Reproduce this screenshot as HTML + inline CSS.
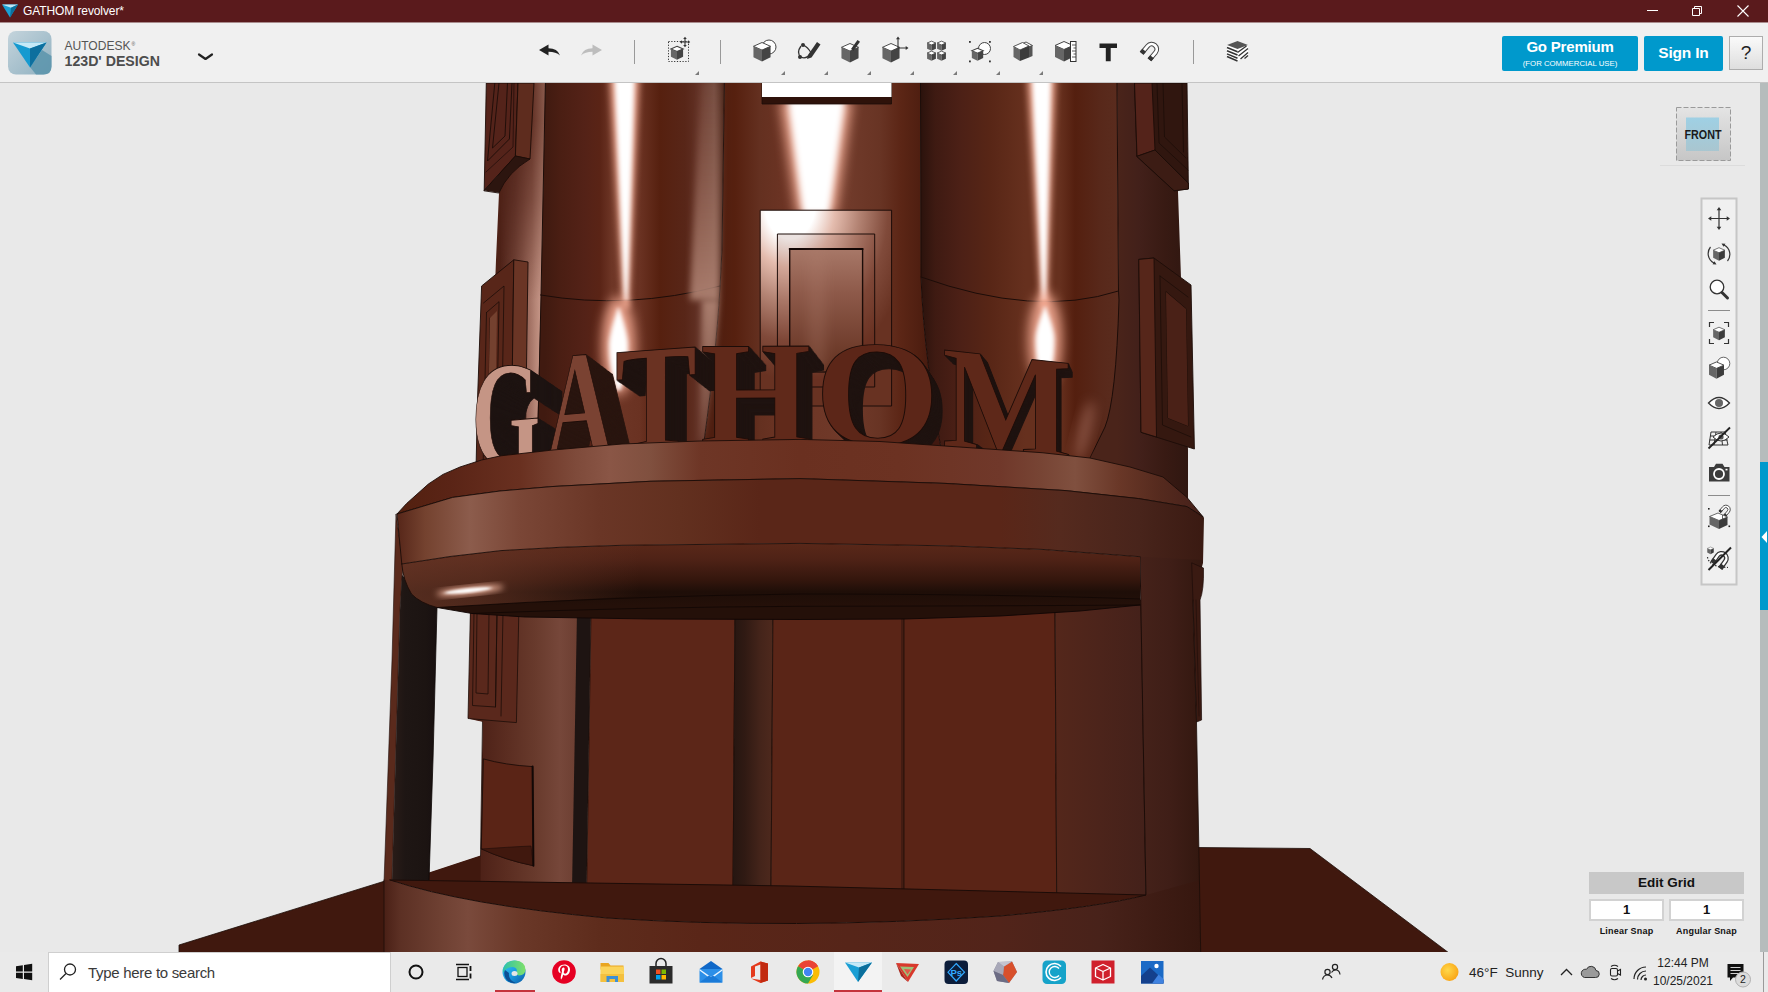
<!DOCTYPE html>
<html><head><meta charset="utf-8"><title>GATHOM revolver</title>
<style>
*{box-sizing:border-box;margin:0;padding:0}
html,body{width:1768px;height:992px;overflow:hidden;background:#e9e9e9;font-family:"Liberation Sans",sans-serif}
#root{position:relative;width:1768px;height:992px;overflow:hidden}
.abs{position:absolute}
#title{left:0;top:0;width:1768px;height:23px;background:#5a1a1c;border-bottom:1px solid #a98c8d;color:#fff;font-size:12px;line-height:23px}
#title span{position:absolute;left:23px;top:0;letter-spacing:-.1px}
#tool{left:0;top:23px;width:1768px;height:60px;background:#f0f0f0;border-bottom:1px solid #c4c4c4}
#view{left:0;top:83px;width:1768px;height:869px;background:#e9e9e9}
#task{left:0;top:952px;width:1768px;height:40px;background:#eaeaea}
#scene{left:0;top:0;width:1768px;height:992px}
.btn{border-radius:2px;background:#0099cc;color:#fff;text-align:center;font-weight:bold}
</style></head><body><div id="root">
<div id="view" class="abs"></div>
<svg id="scene" class="abs" width="1768" height="992" viewBox="0 0 1768 992">
<defs>
<clipPath id="vp"><rect x="0" y="83" width="1760" height="869"/></clipPath>
<filter id="b2" x="-50%" y="-10%" width="200%" height="120%"><feGaussianBlur stdDeviation="2.2 1"/></filter>
<filter id="b3" x="-50%" y="-20%" width="200%" height="140%"><feGaussianBlur stdDeviation="3"/></filter>
<filter id="b6" x="-50%" y="-20%" width="200%" height="140%"><feGaussianBlur stdDeviation="6"/></filter>
<filter id="b10" x="-50%" y="-50%" width="200%" height="200%"><feGaussianBlur stdDeviation="10"/></filter>
<linearGradient id="gLwall" gradientUnits="userSpaceOnUse" x1="486" y1="0" x2="546" y2="0"><stop offset="0" stop-color="#4a1f14"/><stop offset="0.483333" stop-color="#52241a"/><stop offset="0.766667" stop-color="#633226"/><stop offset="0.983333" stop-color="#8a5a4c"/></linearGradient>
<linearGradient id="gLcyl" gradientUnits="userSpaceOnUse" x1="545" y1="0" x2="724" y2="0"><stop offset="0" stop-color="#401a10"/><stop offset="0.0837989" stop-color="#4a1e13"/><stop offset="0.223464" stop-color="#542217"/><stop offset="0.307263" stop-color="#5a2416"/><stop offset="0.374302" stop-color="#6e3626"/><stop offset="0.530726" stop-color="#6a3222"/><stop offset="0.642458" stop-color="#56200f"/><stop offset="0.782123" stop-color="#582618"/><stop offset="0.865922" stop-color="#623226"/><stop offset="0.944134" stop-color="#70483c"/><stop offset="1" stop-color="#4a2418"/></linearGradient>
<linearGradient id="gCen" gradientUnits="userSpaceOnUse" x1="714" y1="0" x2="934" y2="0"><stop offset="0" stop-color="#4e1e10"/><stop offset="0.0954545" stop-color="#56200f"/><stop offset="0.209091" stop-color="#643020"/><stop offset="0.322727" stop-color="#6c3424"/><stop offset="0.618182" stop-color="#703a2a"/><stop offset="0.754545" stop-color="#683424"/><stop offset="0.845455" stop-color="#5c2616"/><stop offset="0.945455" stop-color="#4e1e10"/><stop offset="1" stop-color="#401810"/></linearGradient>
<linearGradient id="gRcyl" gradientUnits="userSpaceOnUse" x1="920" y1="0" x2="1118" y2="0"><stop offset="0" stop-color="#2a120c"/><stop offset="0.0757576" stop-color="#3e1a12"/><stop offset="0.20202" stop-color="#4c2016"/><stop offset="0.353535" stop-color="#582616"/><stop offset="0.530303" stop-color="#66301e"/><stop offset="0.707071" stop-color="#66301e"/><stop offset="0.782828" stop-color="#541f0f"/><stop offset="0.909091" stop-color="#58281a"/><stop offset="1" stop-color="#5a2c1e"/></linearGradient>
<linearGradient id="gRwall" gradientUnits="userSpaceOnUse" x1="1117" y1="0" x2="1192" y2="0"><stop offset="0" stop-color="#4a241a"/><stop offset="0.306667" stop-color="#42201a"/><stop offset="0.64" stop-color="#381a13"/><stop offset="1" stop-color="#2e1610"/></linearGradient>
</defs>
<g clip-path="url(#vp)">
<polygon points="1196,847.5 1310,848.5 1449,953 1196,953" fill="#40180e" stroke="#1c0c08" stroke-width="0.8" stroke-linejoin="round" />
<polygon points="179,945 385,881 385,953 179,953" fill="#40180e" stroke="#1c0c08" stroke-width="0.8" stroke-linejoin="round" />
<polygon points="425,873 484,854 484,890 425,890" fill="#40180e" />
<polygon points="496,83 546,83 541,300 536,470 488,470 496,260 499,193" fill="url(#gLwall)" />
<linearGradient id="gPinkH" gradientUnits="userSpaceOnUse" x1="500" y1="0" x2="542" y2="0"><stop offset="0" stop-color="#c09080" stop-opacity="0"/><stop offset="0.52381" stop-color="#c09080" stop-opacity="0.45"/><stop offset="1" stop-color="#c8988a" stop-opacity="1"/></linearGradient>
<linearGradient id="gPinkM" gradientUnits="userSpaceOnUse" x1="0" y1="120" x2="0" y2="300"><stop offset="0" stop-color="#fff" stop-opacity="0"/><stop offset="0.444444" stop-color="#fff" stop-opacity="0.35"/><stop offset="1" stop-color="#fff" stop-opacity="1"/></linearGradient>
<mask id="mPink" maskUnits="userSpaceOnUse" x="480" y="83" width="80" height="400"><rect x="480" y="83" width="80" height="400" fill="url(#gPinkM)"/></mask>
<polygon points="500,120 545,120 539,430 500,430" fill="url(#gPinkH)" mask="url(#mPink)"/>
<path d="M545.4,83 L724.4,83 L722,250 L720,287 Q716,360 700,470 L536,470 L541,296 Z" fill="url(#gLcyl)" />
<path d="M724.4,83 L920.5,83 L921,277 Q924,360 945,470 L700,470 Q716,360 720,287 L722,250 Z" fill="url(#gCen)" />
<polygon points="1117,83 1187,83 1178,192 1181,278 1188,450 1188,500 1080,500 1080,470 1118.5,291" fill="url(#gRwall)" />
<path d="M920.5,83 L1117,83 L1118.5,291 L1119,300 Q1116,400 1105,427 L1085,470 L945,470 Q924,360 921,277 Z" fill="url(#gRcyl)" />
<path d="M540.5,295 Q628,310 720,286" fill="none" stroke="#1c0c08" stroke-width="1" stroke-linejoin="round" stroke-linecap="round" />
<path d="M921,277 Q1035,318 1118.5,291" fill="none" stroke="#1c0c08" stroke-width="1" stroke-linejoin="round" stroke-linecap="round" />
<path d="M545.4,83 L541,296 L537,470" fill="none" stroke="#1c0c08" stroke-width="1" stroke-linejoin="round" stroke-linecap="round" />
<path d="M724.4,83 L722,250 L720,287 Q716,360 700,470" fill="none" stroke="#1c0c08" stroke-width="1" stroke-linejoin="round" stroke-linecap="round" />
<path d="M920.5,83 L921,277 Q924,360 945,470" fill="none" stroke="#1c0c08" stroke-width="1" stroke-linejoin="round" stroke-linecap="round" />
<path d="M1117,83 L1118.5,291 L1119,300 Q1116,400 1105,427 L1088,462" fill="none" stroke="#1c0c08" stroke-width="1" stroke-linejoin="round" stroke-linecap="round" />
<linearGradient id="gBandV" gradientUnits="userSpaceOnUse" x1="0" y1="83" x2="0" y2="300"><stop offset="0" stop-color="#a47464" stop-opacity="0.15"/><stop offset="1" stop-color="#b08474" stop-opacity="0.9"/></linearGradient>
<path d="M700,83 L722,83 L719,300 L690,300 Z" fill="url(#gBandV)" filter="url(#b3)"/>
<linearGradient id="gBandV2" gradientUnits="userSpaceOnUse" x1="0" y1="300" x2="0" y2="440"><stop offset="0" stop-color="#b08474" stop-opacity="0.9"/><stop offset="1" stop-color="#b08474" stop-opacity="0.2"/></linearGradient>
<path d="M702,300 L719,300 Q714,380 704,440 L699,440 Z" fill="url(#gBandV2)" filter="url(#b3)"/>
<polygon points="609.5,78 639.5,78 629.5,308 622.5,308" fill="#ffb8a0" filter="url(#b3)" opacity="0.8"/>
<polygon points="614.5,78 634.5,78 627.5,300 624.5,300" fill="#ffffff" filter="url(#b2)"/>
<polygon points="1027,78 1056,78 1047.5,308 1040.5,308" fill="#ffb8a0" filter="url(#b3)" opacity="0.8"/>
<polygon points="1032,78 1051,78 1045.5,300 1042.5,300" fill="#ffffff" filter="url(#b2)"/>
<polygon points="780,100 852,100 836,215 797,215" fill="#ffb8a0" filter="url(#b6)" opacity="0.85"/>
<polygon points="788,100 845,100 829,214 803,214" fill="#ffffff" filter="url(#b3)"/>
<ellipse cx="618.5" cy="346" rx="16.5" ry="49" fill="#ffb49c" filter="url(#b6)" opacity="0.85"/>
<path d="M618.5,306 C623.725,322 628,336 628,346 C628,369 622.3,388 618.5,392 C614.7,388 609,369 609,346 C609,336 613.275,322 618.5,306 Z" fill="#ffffff" filter="url(#b2)"/>
<ellipse cx="1045" cy="340" rx="16.5" ry="47.5" fill="#ffb49c" filter="url(#b6)" opacity="0.85"/>
<path d="M1045,305 C1050.22,319 1054.5,331.25 1054.5,340 C1054.5,364 1048.8,384 1045,388 C1041.2,384 1035.5,364 1035.5,340 C1035.5,331.25 1039.78,319 1045,305 Z" fill="#ffffff" filter="url(#b2)"/>
<ellipse cx="1084" cy="432" rx="7" ry="32" fill="#b07868" filter="url(#b6)" opacity="0.5" transform="rotate(14 1084 432)"/>
<polygon points="762,83 891.5,83 891.5,104 762,104" fill="#2e120a" stroke="#1c0c08" stroke-width="0.8" stroke-linejoin="round" />
<polygon points="762,83 891.5,83 891.5,97 762,97" fill="#ffffff" />
<radialGradient id="gDoor" gradientUnits="userSpaceOnUse" cx="790" cy="204" r="175" gradientTransform="translate(790 204) scale(0.72 1) translate(-790 -204)"><stop offset="0" stop-color="#ffffff"/><stop offset="0.2" stop-color="#ffffff"/><stop offset="0.36" stop-color="#e4bcae"/><stop offset="0.55" stop-color="#b48474"/><stop offset="0.78" stop-color="#804a3a"/><stop offset="1" stop-color="#683222"/></radialGradient>
<polygon points="760.2,210.2 891.6,210.2 891.6,406 760.2,406" fill="url(#gDoor)" stroke="#1c0c08" stroke-width="1" stroke-linejoin="round" />
<polygon points="777.4,234 874.7,234 874.7,387 777.4,387" fill="#6e3020" stroke="#1c0c08" stroke-width="1" stroke-linejoin="round" fill-opacity="0.14"/>
<linearGradient id="gDoorIn" x1="0" y1="0" x2="0" y2="1"><stop offset="0" stop-color="#a87868"/><stop offset="0.35" stop-color="#8e5a4a"/><stop offset="1" stop-color="#62301f"/></linearGradient>
<polygon points="789.7,248.9 862.6,248.9 862.6,372 789.7,372" fill="url(#gDoorIn)" stroke="#1c0c08" stroke-width="1.4" stroke-linejoin="round" />
<path d="M789.7,248.9 L862.6,248.9" fill="none" stroke="#120604" stroke-width="2" stroke-linejoin="round" stroke-linecap="round" />
<rect x="808" y="250" width="18" height="120" fill="#b08070" opacity="0.25" filter="url(#b6)"/>
<linearGradient id="gInner" gradientUnits="userSpaceOnUse" x1="482" y1="0" x2="578" y2="0"><stop offset="0" stop-color="#4e2218"/><stop offset="0.239583" stop-color="#5a2c20"/><stop offset="0.552083" stop-color="#683a2c"/><stop offset="0.8125" stop-color="#76473a"/><stop offset="1" stop-color="#6c3e31"/></linearGradient>
<polygon points="470,610 578,612 573,890 480,890 482.5,722 470,720" fill="url(#gInner)" />
<polygon points="437,608 470.4,612 468,718.5 482.5,722 480.5,856 429,873 433,760" fill="#e9e9e9" />
<polygon points="429,872.5 480.5,855.5 480.5,890 429,890" fill="#40180e" />
<polygon points="470.4,612 518.8,614 516.4,722.6 468,718.5" fill="#5a281c" stroke="#1c0c08" stroke-width="0.8" stroke-linejoin="round" />
<polygon points="474,612 497,613 495.5,707 472.5,705.5" fill="none" stroke="#1c0c08" stroke-width="0.8" stroke-linejoin="round" />
<polygon points="477,612 489,613 488,694 476,693" fill="none" stroke="#1c0c08" stroke-width="0.8" stroke-linejoin="round" />
<path d="M503,613 L501,716 M497,613 L495.5,707" fill="none" stroke="#1c0c08" stroke-width="0.8" stroke-linejoin="round" stroke-linecap="round" />
<path d="M482.5,722 L480.5,856" fill="none" stroke="#1c0c08" stroke-width="0.8" stroke-linejoin="round" stroke-linecap="round" />
<path d="M483.7,759 Q505,765 532.6,766.6 L533.4,865.7 Q505,860 481.6,849 Z" fill="#5a2416" stroke="#1c0c08" stroke-width="0.9" stroke-linejoin="round" stroke-linecap="round" />
<path d="M481.6,849 Q510,847 531,846 L533.4,865.7 Q505,860 481.6,849 Z" fill="#40180e" stroke="#1c0c08" stroke-width="0.6" stroke-linejoin="round" stroke-linecap="round" />
<path d="M532.6,766.6 L533.4,865.7" fill="none" stroke="#120806" stroke-width="2" stroke-linejoin="round" stroke-linecap="round" />
<polygon points="577,612 591,612 586.6,890 572,890" fill="#1e1412" />
<polygon points="591,612 735,612 733,890 586.6,890" fill="#5c2618" stroke="#1c0c08" stroke-width="0.8" stroke-linejoin="round" />
<linearGradient id="gCol" gradientUnits="userSpaceOnUse" x1="733" y1="0" x2="773" y2="0"><stop offset="0" stop-color="#261611"/><stop offset="0.3" stop-color="#301a13"/><stop offset="0.675" stop-color="#44241a"/><stop offset="1" stop-color="#4e291d"/></linearGradient>
<polygon points="735,612 773,612 771,890 733,890" fill="url(#gCol)" stroke="#1c0c08" stroke-width="0.8" stroke-linejoin="round" />
<polygon points="773,612 904,612 904,892 771,890" fill="#5a2517" stroke="#1c0c08" stroke-width="0.8" stroke-linejoin="round" />
<polygon points="904,612 1055,612 1056.7,895 904,892" fill="#5a2416" stroke="#1c0c08" stroke-width="0.8" stroke-linejoin="round" />
<path d="M902,618 L902,892" fill="none" stroke="#1c0c08" stroke-width="0.7" stroke-linejoin="round" stroke-linecap="round" />
<linearGradient id="gRW1" gradientUnits="userSpaceOnUse" x1="1055" y1="0" x2="1143" y2="0"><stop offset="0" stop-color="#54271b"/><stop offset="0.511364" stop-color="#4c241b"/><stop offset="1" stop-color="#44211a"/></linearGradient>
<polygon points="1055,600 1141,600 1146,897 1056.7,895" fill="url(#gRW1)" stroke="#1c0c08" stroke-width="0.8" stroke-linejoin="round" />
<linearGradient id="gRW2" gradientUnits="userSpaceOnUse" x1="1140" y1="0" x2="1204" y2="0"><stop offset="0" stop-color="#45221a"/><stop offset="0.46875" stop-color="#3f1e17"/><stop offset="1" stop-color="#32170f"/></linearGradient>
<polygon points="1140,556 1204,517 1203,563 1193,600 1196.5,723 1199.3,872 1200.7,953 1146,953 1146,897" fill="url(#gRW2)" />
<path d="M1140,557 L1146,897" fill="none" stroke="#1c0c08" stroke-width="1" stroke-linejoin="round" stroke-linecap="round" />
<path d="M1192,563 L1203.5,568 Q1204,590 1200,600 L1201.6,720 L1196.5,722 L1193,600 Z" fill="#3a1a12" stroke="#1c0c08" stroke-width="0.7" stroke-linejoin="round" stroke-linecap="round" />
<path d="M1196,600 L1199,716" fill="none" stroke="#1c0c08" stroke-width="0.6" stroke-linejoin="round" stroke-linecap="round" />
<polygon points="396,514 403,564 400,610 392,882 384,882 392,660" fill="#5a2a1c" stroke="#1c0c08" stroke-width="0.6" stroke-linejoin="round" />
<linearGradient id="gPil" gradientUnits="userSpaceOnUse" x1="392" y1="0" x2="437" y2="0"><stop offset="0" stop-color="#2a1c18"/><stop offset="0.288889" stop-color="#1e1614"/><stop offset="0.733333" stop-color="#1c1412"/><stop offset="1" stop-color="#181010"/></linearGradient>
<path d="M402,575 L437,607.5 L433,760 L429,882 L392,882 L400,610 Z" fill="url(#gPil)" />
<path d="M437,607.5 L433,760 L429,880" fill="none" stroke="#0e0806" stroke-width="0.8" stroke-linejoin="round" stroke-linecap="round" />
<linearGradient id="gBase" gradientUnits="userSpaceOnUse" x1="384" y1="0" x2="1200" y2="0"><stop offset="0" stop-color="#4a2016"/><stop offset="0.0196078" stop-color="#5c3024"/><stop offset="0.0686275" stop-color="#6e4032"/><stop offset="0.102941" stop-color="#7a4a3c"/><stop offset="0.166667" stop-color="#6a3828"/><stop offset="0.264706" stop-color="#5e2c1c"/><stop offset="0.387255" stop-color="#5a2618"/><stop offset="0.754902" stop-color="#52241a"/><stop offset="0.877451" stop-color="#48221a"/><stop offset="1.00123" stop-color="#36170f"/></linearGradient>
<path d="M384,880 L390,880 Q465,905 607,918 Q790,930 1000,916 Q1100,907 1146,895 L1199.5,880 L1200.7,953 L384,953 Z" fill="url(#gBase)" />
<path d="M390,880 L790,886 L1146,895 Q1100,907 1000,916 Q790,930 607,918 Q465,905 390,880 Z" fill="#40180e" stroke="#1c0c08" stroke-width="1" stroke-linejoin="round" stroke-linecap="round" />
<path d="M384,880 L384,953" fill="none" stroke="#1c0c08" stroke-width="0.8" stroke-linejoin="round" stroke-linecap="round" />
<path d="M1193,600 L1196.5,723 L1199.3,872 L1200.7,953" fill="none" stroke="#1c0c08" stroke-width="0.8" stroke-linejoin="round" stroke-linecap="round" />
<polygon points="486.3,83 518,83 515.4,156 484.2,190.5" fill="#54231a" stroke="#1c0c08" stroke-width="0.9" stroke-linejoin="round" />
<polygon points="518,83 534,83 530,159 515.4,156" fill="#5e2c1e" stroke="#1c0c08" stroke-width="0.9" stroke-linejoin="round" />
<path d="M484.2,190.5 L515.4,156 L530,159 Q508,172 499,192.7 Z" fill="#2c150f" stroke="#1c0c08" stroke-width="0.9" stroke-linejoin="round" stroke-linecap="round" />
<path d="M494.8,83 L487.5,161 L509.4,139 L512,83" fill="none" stroke="#1c0c08" stroke-width="0.9" stroke-linejoin="round" stroke-linecap="round" />
<path d="M499,83 L492.5,148 L505,136 L507.5,83" fill="none" stroke="#1c0c08" stroke-width="0.9" stroke-linejoin="round" stroke-linecap="round" />
<path d="M486,172 L513,147 L514,83" fill="none" stroke="#1c0c08" stroke-width="0.7" stroke-linejoin="round" stroke-linecap="round" />
<polygon points="481.6,286 513.8,259.8 511,470 476,470 477.5,400" fill="#582619" stroke="#1c0c08" stroke-width="0.9" stroke-linejoin="round" />
<polygon points="513.8,259.8 528,262 525,470 511,470" fill="#6a3525" stroke="#1c0c08" stroke-width="0.9" stroke-linejoin="round" />
<path d="M483.5,303 L504,286 L501,470 M486.5,312.5 L499,301.7 L496,470 M486.5,312.5 L483,470 M490,318 L488,470" fill="none" stroke="#1c0c08" stroke-width="0.8" stroke-linejoin="round" stroke-linecap="round" />
<polygon points="490,318 497,311 494.5,470 487,470" fill="#74412f" />
<polygon points="1134.5,83 1187,83 1188.4,189 1174.4,190.7 1137,156.3" fill="#30160f" stroke="#1c0c08" stroke-width="0.9" stroke-linejoin="round" />
<polygon points="1134.5,83 1152,83 1155,150 1137,156.3" fill="#54231a" stroke="#1c0c08" stroke-width="0.9" stroke-linejoin="round" />
<path d="M1137,156.3 L1155,150 L1188.4,183 L1188.4,189 L1174.4,190.7 Z" fill="#3c1c14" stroke="#1c0c08" stroke-width="0.9" stroke-linejoin="round" stroke-linecap="round" />
<path d="M1155,150 L1188,183 M1157,83 L1159,143 L1188,170 M1163,83 L1164.5,137 L1186,158 M1182,83 L1183.5,152" fill="none" stroke="#1c0c08" stroke-width="0.8" stroke-linejoin="round" stroke-linecap="round" />
<polygon points="1138.8,259.4 1154,258 1191,285 1194.4,449 1141,432.3" fill="#351810" stroke="#1c0c08" stroke-width="0.9" stroke-linejoin="round" />
<polygon points="1138.8,259.4 1154,258 1156.5,437 1141,432.3" fill="#56261a" stroke="#1c0c08" stroke-width="0.9" stroke-linejoin="round" />
<path d="M1160,276 L1162.5,425 L1191,437 M1160,276 L1188,297 M1166,292 L1168,418 L1188,426 L1186,309 Z" fill="none" stroke="#1c0c08" stroke-width="0.8" stroke-linejoin="round" stroke-linecap="round" />
<polygon points="1166,292 1186,309 1188,426 1168,418" fill="#4a2117" />
<g font-family="'Liberation Serif',serif" font-weight="bold" font-size="150">
<g fill="#1e1412" stroke="#1e1412" stroke-width="1.2">
<text transform="matrix(0.5664 -0.0472 0.0000 0.9600 505.46 485.85)">G</text>
<text transform="matrix(0.5671 -0.0472 0.0000 0.9612 504.46 485.32)">G</text>
<text transform="matrix(0.5678 -0.0472 0.0000 0.9624 503.46 484.79)">G</text>
<text transform="matrix(0.5685 -0.0472 0.0000 0.9635 502.46 484.26)">G</text>
<text transform="matrix(0.5692 -0.0472 0.0000 0.9647 501.46 483.73)">G</text>
<text transform="matrix(0.5699 -0.0472 0.0000 0.9659 500.46 483.20)">G</text>
<text transform="matrix(0.5706 -0.0472 0.0000 0.9671 499.46 482.67)">G</text>
<text transform="matrix(0.5713 -0.0472 0.0000 0.9682 498.46 482.14)">G</text>
<text transform="matrix(0.5720 -0.0472 0.0000 0.9694 497.46 481.61)">G</text>
<text transform="matrix(0.5726 -0.0472 0.0000 0.9706 496.46 481.08)">G</text>
<text transform="matrix(0.5733 -0.0472 0.0000 0.9718 495.46 480.55)">G</text>
<text transform="matrix(0.5740 -0.0472 0.0000 0.9729 494.46 480.02)">G</text>
<text transform="matrix(0.5747 -0.0472 0.0000 0.9741 493.46 479.49)">G</text>
<text transform="matrix(0.5754 -0.0472 0.0000 0.9753 492.46 478.96)">G</text>
<text transform="matrix(0.5761 -0.0472 0.0000 0.9765 491.46 478.44)">G</text>
<text transform="matrix(0.5768 -0.0472 0.0000 0.9776 490.46 477.91)">G</text>
<text transform="matrix(0.5775 -0.0472 0.0000 0.9788 489.46 477.38)">G</text>
<text transform="matrix(0.5782 -0.0472 0.0000 0.9800 488.46 476.85)">G</text>
<text transform="matrix(0.5789 -0.0472 0.0000 0.9812 487.46 476.32)">G</text>
<text transform="matrix(0.5796 -0.0472 0.0000 0.9824 486.46 475.79)">G</text>
<text transform="matrix(0.5803 -0.0472 0.0000 0.9835 485.46 475.26)">G</text>
<text transform="matrix(0.5810 -0.0472 0.0000 0.9847 484.46 474.73)">G</text>
<text transform="matrix(0.5817 -0.0472 0.0000 0.9859 483.46 474.20)">G</text>
<text transform="matrix(0.5824 -0.0472 0.0000 0.9871 482.46 473.67)">G</text>
<text transform="matrix(0.5831 -0.0472 0.0000 0.9882 481.46 473.14)">G</text>
<text transform="matrix(0.5838 -0.0472 0.0000 0.9894 480.46 472.61)">G</text>
<text transform="matrix(0.5844 -0.0472 0.0000 0.9906 479.46 472.08)">G</text>
<text transform="matrix(0.5851 -0.0472 0.0000 0.9918 478.46 471.55)">G</text>
<text transform="matrix(0.5858 -0.0472 0.0000 0.9929 477.46 471.02)">G</text>
<text transform="matrix(0.5865 -0.0472 0.0000 0.9941 476.46 470.49)">G</text>
<text transform="matrix(0.5872 -0.0472 0.0000 0.9953 475.46 469.96)">G</text>
<text transform="matrix(0.5879 -0.0472 0.0000 0.9965 474.46 469.44)">G</text>
<text transform="matrix(0.5886 -0.0472 0.0000 0.9976 473.46 468.91)">G</text>
<text transform="matrix(0.5893 -0.0472 0.0000 0.9988 472.46 468.38)">G</text>
</g>
<text transform="matrix(0.5900 -0.0472 0.0000 1.0000 471.46 467.85)" fill="#c59585" stroke="#1c0c08" stroke-width="0.9">G</text>
<g fill="#2a1610" stroke="#2a1610" stroke-width="1.2">
<text transform="matrix(0.6000 -0.0537 0.0000 0.9600 573.56 473.08)">A</text>
<text transform="matrix(0.6009 -0.0537 0.0000 0.9614 572.56 472.51)">A</text>
<text transform="matrix(0.6018 -0.0537 0.0000 0.9629 571.56 471.94)">A</text>
<text transform="matrix(0.6027 -0.0537 0.0000 0.9643 570.56 471.37)">A</text>
<text transform="matrix(0.6036 -0.0537 0.0000 0.9657 569.56 470.79)">A</text>
<text transform="matrix(0.6045 -0.0537 0.0000 0.9671 568.56 470.22)">A</text>
<text transform="matrix(0.6054 -0.0537 0.0000 0.9686 567.56 469.65)">A</text>
<text transform="matrix(0.6062 -0.0537 0.0000 0.9700 566.56 469.08)">A</text>
<text transform="matrix(0.6071 -0.0537 0.0000 0.9714 565.56 468.51)">A</text>
<text transform="matrix(0.6080 -0.0537 0.0000 0.9729 564.56 467.94)">A</text>
<text transform="matrix(0.6089 -0.0537 0.0000 0.9743 563.56 467.37)">A</text>
<text transform="matrix(0.6098 -0.0537 0.0000 0.9757 562.56 466.79)">A</text>
<text transform="matrix(0.6107 -0.0537 0.0000 0.9771 561.56 466.22)">A</text>
<text transform="matrix(0.6116 -0.0537 0.0000 0.9786 560.56 465.65)">A</text>
<text transform="matrix(0.6125 -0.0537 0.0000 0.9800 559.56 465.08)">A</text>
<text transform="matrix(0.6134 -0.0537 0.0000 0.9814 558.56 464.51)">A</text>
<text transform="matrix(0.6143 -0.0537 0.0000 0.9829 557.56 463.94)">A</text>
<text transform="matrix(0.6152 -0.0537 0.0000 0.9843 556.56 463.37)">A</text>
<text transform="matrix(0.6161 -0.0537 0.0000 0.9857 555.56 462.79)">A</text>
<text transform="matrix(0.6170 -0.0537 0.0000 0.9871 554.56 462.22)">A</text>
<text transform="matrix(0.6179 -0.0537 0.0000 0.9886 553.56 461.65)">A</text>
<text transform="matrix(0.6188 -0.0537 0.0000 0.9900 552.56 461.08)">A</text>
<text transform="matrix(0.6196 -0.0537 0.0000 0.9914 551.56 460.51)">A</text>
<text transform="matrix(0.6205 -0.0537 0.0000 0.9929 550.56 459.94)">A</text>
<text transform="matrix(0.6214 -0.0537 0.0000 0.9943 549.56 459.37)">A</text>
<text transform="matrix(0.6223 -0.0537 0.0000 0.9957 548.56 458.79)">A</text>
<text transform="matrix(0.6232 -0.0537 0.0000 0.9971 547.56 458.22)">A</text>
<text transform="matrix(0.6241 -0.0537 0.0000 0.9986 546.56 457.65)">A</text>
</g>
<text transform="matrix(0.6250 -0.0537 0.0000 1.0000 545.56 457.08)" fill="#7a4232" stroke="#1c0c08" stroke-width="0.9">A</text>
<g fill="#1f1310" stroke="#1f1310" stroke-width="1.2">
<text transform="matrix(0.7862 -0.0590 0.0000 0.9600 638.03 464.04)">T</text>
<text transform="matrix(0.7877 -0.0590 0.0000 0.9617 637.03 463.48)">T</text>
<text transform="matrix(0.7891 -0.0590 0.0000 0.9635 636.03 462.91)">T</text>
<text transform="matrix(0.7905 -0.0590 0.0000 0.9652 635.03 462.35)">T</text>
<text transform="matrix(0.7919 -0.0590 0.0000 0.9670 634.03 461.78)">T</text>
<text transform="matrix(0.7934 -0.0590 0.0000 0.9687 633.03 461.22)">T</text>
<text transform="matrix(0.7948 -0.0590 0.0000 0.9704 632.03 460.65)">T</text>
<text transform="matrix(0.7962 -0.0590 0.0000 0.9722 631.03 460.09)">T</text>
<text transform="matrix(0.7976 -0.0590 0.0000 0.9739 630.03 459.52)">T</text>
<text transform="matrix(0.7991 -0.0590 0.0000 0.9757 629.03 458.95)">T</text>
<text transform="matrix(0.8005 -0.0590 0.0000 0.9774 628.03 458.39)">T</text>
<text transform="matrix(0.8019 -0.0590 0.0000 0.9791 627.03 457.82)">T</text>
<text transform="matrix(0.8033 -0.0590 0.0000 0.9809 626.03 457.26)">T</text>
<text transform="matrix(0.8048 -0.0590 0.0000 0.9826 625.03 456.69)">T</text>
<text transform="matrix(0.8062 -0.0590 0.0000 0.9843 624.03 456.13)">T</text>
<text transform="matrix(0.8076 -0.0590 0.0000 0.9861 623.03 455.56)">T</text>
<text transform="matrix(0.8090 -0.0590 0.0000 0.9878 622.03 455.00)">T</text>
<text transform="matrix(0.8105 -0.0590 0.0000 0.9896 621.03 454.43)">T</text>
<text transform="matrix(0.8119 -0.0590 0.0000 0.9913 620.03 453.87)">T</text>
<text transform="matrix(0.8133 -0.0590 0.0000 0.9930 619.03 453.30)">T</text>
<text transform="matrix(0.8147 -0.0590 0.0000 0.9948 618.03 452.74)">T</text>
<text transform="matrix(0.8162 -0.0590 0.0000 0.9965 617.03 452.17)">T</text>
<text transform="matrix(0.8176 -0.0590 0.0000 0.9983 616.03 451.61)">T</text>
</g>
<text transform="matrix(0.8190 -0.0590 0.0000 1.0000 615.03 451.04)" fill="#6a3222" stroke="#1c0c08" stroke-width="0.9">T</text>
<g fill="#1f1310" stroke="#1f1310" stroke-width="1.2">
<text transform="matrix(0.9130 -0.0048 0.0000 0.9600 719.17 459.71)">H</text>
<text transform="matrix(0.9150 -0.0048 0.0000 0.9621 718.17 458.92)">H</text>
<text transform="matrix(0.9170 -0.0048 0.0000 0.9642 717.17 458.13)">H</text>
<text transform="matrix(0.9190 -0.0048 0.0000 0.9663 716.17 457.34)">H</text>
<text transform="matrix(0.9210 -0.0048 0.0000 0.9684 715.17 456.55)">H</text>
<text transform="matrix(0.9230 -0.0048 0.0000 0.9705 714.17 455.76)">H</text>
<text transform="matrix(0.9250 -0.0048 0.0000 0.9726 713.17 454.98)">H</text>
<text transform="matrix(0.9270 -0.0048 0.0000 0.9747 712.17 454.19)">H</text>
<text transform="matrix(0.9290 -0.0048 0.0000 0.9768 711.17 453.40)">H</text>
<text transform="matrix(0.9310 -0.0048 0.0000 0.9789 710.17 452.61)">H</text>
<text transform="matrix(0.9330 -0.0048 0.0000 0.9811 709.17 451.82)">H</text>
<text transform="matrix(0.9350 -0.0048 0.0000 0.9832 708.17 451.03)">H</text>
<text transform="matrix(0.9370 -0.0048 0.0000 0.9853 707.17 450.24)">H</text>
<text transform="matrix(0.9390 -0.0048 0.0000 0.9874 706.17 449.45)">H</text>
<text transform="matrix(0.9410 -0.0048 0.0000 0.9895 705.17 448.66)">H</text>
<text transform="matrix(0.9430 -0.0048 0.0000 0.9916 704.17 447.87)">H</text>
<text transform="matrix(0.9450 -0.0048 0.0000 0.9937 703.17 447.08)">H</text>
<text transform="matrix(0.9470 -0.0048 0.0000 0.9958 702.17 446.29)">H</text>
<text transform="matrix(0.9490 -0.0048 0.0000 0.9979 701.17 445.50)">H</text>
</g>
<text transform="matrix(0.9510 -0.0048 0.0000 1.0000 700.17 444.71)" fill="#60291a" stroke="#1c0c08" stroke-width="0.9">H</text>
<g fill="#1f1310" stroke="#1f1310" stroke-width="1.2">
<text transform="matrix(1.0272 0.0214 0.0000 0.9600 829.84 455.64)">O</text>
<text transform="matrix(1.0301 0.0214 0.0000 0.9627 828.84 454.78)">O</text>
<text transform="matrix(1.0329 0.0214 0.0000 0.9653 827.84 453.91)">O</text>
<text transform="matrix(1.0358 0.0214 0.0000 0.9680 826.84 453.04)">O</text>
<text transform="matrix(1.0386 0.0214 0.0000 0.9707 825.84 452.18)">O</text>
<text transform="matrix(1.0415 0.0214 0.0000 0.9733 824.84 451.31)">O</text>
<text transform="matrix(1.0443 0.0214 0.0000 0.9760 823.84 450.44)">O</text>
<text transform="matrix(1.0472 0.0214 0.0000 0.9787 822.84 449.58)">O</text>
<text transform="matrix(1.0500 0.0214 0.0000 0.9813 821.84 448.71)">O</text>
<text transform="matrix(1.0529 0.0214 0.0000 0.9840 820.84 447.84)">O</text>
<text transform="matrix(1.0557 0.0214 0.0000 0.9867 819.84 446.98)">O</text>
<text transform="matrix(1.0586 0.0214 0.0000 0.9893 818.84 446.11)">O</text>
<text transform="matrix(1.0614 0.0214 0.0000 0.9920 817.84 445.24)">O</text>
<text transform="matrix(1.0643 0.0214 0.0000 0.9947 816.84 444.38)">O</text>
<text transform="matrix(1.0671 0.0214 0.0000 0.9973 815.84 443.51)">O</text>
</g>
<text transform="matrix(1.0700 0.0214 0.0000 1.0000 814.84 442.64)" fill="#5c2618" stroke="#1c0c08" stroke-width="0.9">O</text>
<g fill="#1f1310" stroke="#1f1310" stroke-width="1.2">
<text transform="matrix(0.8803 0.0990 0.0000 0.9408 951.26 450.95)">M</text>
<text transform="matrix(0.8844 0.0990 0.0000 0.9452 950.26 450.39)">M</text>
<text transform="matrix(0.8885 0.0990 0.0000 0.9495 949.26 449.84)">M</text>
<text transform="matrix(0.8925 0.0990 0.0000 0.9539 948.26 449.28)">M</text>
<text transform="matrix(0.8966 0.0990 0.0000 0.9582 947.26 448.73)">M</text>
<text transform="matrix(0.9007 0.0990 0.0000 0.9626 946.26 448.17)">M</text>
<text transform="matrix(0.9048 0.0990 0.0000 0.9669 945.26 447.61)">M</text>
<text transform="matrix(0.9088 0.0990 0.0000 0.9713 944.26 447.06)">M</text>
<text transform="matrix(0.9129 0.0990 0.0000 0.9756 943.26 446.50)">M</text>
</g>
<text transform="matrix(0.9170 0.0990 0.0000 0.9800 942.26 445.95)" fill="#5e2819" stroke="#1c0c08" stroke-width="0.9">M</text>
</g>
<linearGradient id="gCham" gradientUnits="userSpaceOnUse" x1="397" y1="0" x2="1203" y2="0"><stop offset="0" stop-color="#52200f"/><stop offset="0.0657568" stop-color="#5a2416"/><stop offset="0.152605" stop-color="#693020"/><stop offset="0.220844" stop-color="#7e4a3a"/><stop offset="0.264268" stop-color="#8a5646"/><stop offset="0.313896" stop-color="#80503f"/><stop offset="0.375931" stop-color="#6e3626"/><stop offset="0.5" stop-color="#6a3020"/><stop offset="0.624069" stop-color="#6c3222"/><stop offset="0.748139" stop-color="#70382a"/><stop offset="0.797767" stop-color="#774434"/><stop offset="0.841191" stop-color="#80503f"/><stop offset="0.897022" stop-color="#693727"/><stop offset="0.94665" stop-color="#552a1e"/><stop offset="1" stop-color="#45201a"/></linearGradient>
<polygon points="397,514 406.6,503.5 428.4,484 443,474.4 460,467 481.6,460 501,455.8 553,450 622,444 700,441 800,439.4 880,441.5 945,446 1042,452.7 1090,458 1130,467 1163,477 1187,497.4 1203,516.8 1187,506.6 1138.7,498.6 1066,490.6 945,483.4 800,478.6 650,481.3 553,486.5 500,491 452.6,497.4 397,514" fill="url(#gCham)" stroke="#1c0c08" stroke-width="0.9" stroke-linejoin="round" />
<linearGradient id="gBand" gradientUnits="userSpaceOnUse" x1="397" y1="0" x2="1203" y2="0"><stop offset="0" stop-color="#562619"/><stop offset="0.0347395" stop-color="#74422f"/><stop offset="0.0905707" stop-color="#8c5c4c"/><stop offset="0.152605" stop-color="#7a4636"/><stop offset="0.251861" stop-color="#6a3626"/><stop offset="0.351117" stop-color="#62301f"/><stop offset="0.450372" stop-color="#5a2618"/><stop offset="0.748139" stop-color="#5a2618"/><stop offset="0.822581" stop-color="#552a1e"/><stop offset="0.921836" stop-color="#48241b"/><stop offset="1" stop-color="#3a1a12"/></linearGradient>
<polygon points="397,514 452.6,497.4 500,491 553,486.5 650,481.3 800,478.6 945,483.4 1066,490.6 1138.7,498.6 1187,506.6 1203,516.8 1203,560 1140,556.7 1042,549.4 945,545.8 800,543.4 622,545.3 560,547.3 501,550.6 450,556.5 401.8,564" fill="url(#gBand)" />
<path d="M397,514 L452.6,497.4 L500,491 L553,486.5 L650,481.3 L800,478.6 L945,483.4 L1066,490.6 L1138.7,498.6 L1187,506.6 L1203,516.8" fill="none" stroke="#1c0c08" stroke-width="0.9" stroke-linejoin="round" stroke-linecap="round" />
<path d="M397,514 L401.8,564" fill="none" stroke="#1c0c08" stroke-width="0.9" stroke-linejoin="round" stroke-linecap="round" />
<linearGradient id="gFil" gradientUnits="userSpaceOnUse" x1="0" y1="543" x2="0" y2="606"><stop offset="0" stop-color="#5a2819"/><stop offset="0.269841" stop-color="#4e2216"/><stop offset="0.587302" stop-color="#34160d"/><stop offset="0.777778" stop-color="#1e0e08"/><stop offset="1" stop-color="#241009"/></linearGradient>
<path d="M401.8,564 Q403,580 411.5,594 Q420,603 437,607.5 L472,613.5 L525,617 L650,619 L800,619.5 L904,619 L1000,616 L1080,611 L1140,605 L1140,556.7 L1042,549.4 L945,545.8 L800,543.4 L622,545.3 L560,547.3 L501,550.6 L450,556.5 L401.8,564 Z" fill="url(#gFil)" />
<linearGradient id="gFilL" gradientUnits="userSpaceOnUse" x1="400" y1="0" x2="640" y2="0"><stop offset="0" stop-color="#6a3828" stop-opacity="0.9"/><stop offset="0.333333" stop-color="#6a3828" stop-opacity="0.75"/><stop offset="1" stop-color="#6a3828" stop-opacity="0"/></linearGradient>
<linearGradient id="gFilLm" gradientUnits="userSpaceOnUse" x1="0" y1="560" x2="0" y2="600"><stop offset="0" stop-color="#fff" stop-opacity="1"/><stop offset="1" stop-color="#fff" stop-opacity="0"/></linearGradient>
<path d="M401.8,564 Q403,580 411.5,594 Q420,603 437,607.5 L640,596 L640,545 L501,550.6 Z" fill="url(#gFilL)" opacity="0.8"/>
<path d="M437,607.5 Q620,596 800,594 Q1000,594 1140,599" fill="none" stroke="#100604" stroke-width="0.8" stroke-linejoin="round" stroke-linecap="round" />
<path d="M472,613.5 Q640,607 800,606.3 Q1000,606 1140,605" fill="none" stroke="#100604" stroke-width="0.8" stroke-linejoin="round" stroke-linecap="round" />
<path d="M437,607.5 L472,613.5 L525,617 L650,619 L800,619.5 L904,619 L1000,616 L1080,611 L1140,605" fill="none" stroke="#100604" stroke-width="0.9" stroke-linejoin="round" stroke-linecap="round" />
<path d="M401.8,564 L450,556.5 L501,550.6 L560,547.3 L622,545.3 L800,543.4 L945,545.8 L1042,549.4 L1140,556.7" fill="none" stroke="#1c0c08" stroke-width="0.9" stroke-linejoin="round" stroke-linecap="round" />
<path d="M401.8,564 Q403,580 411.5,594 Q420,603 437,607.5" fill="none" stroke="#1c0c08" stroke-width="0.9" stroke-linejoin="round" stroke-linecap="round" />
<ellipse cx="470" cy="590.5" rx="34" ry="4" fill="#ffc0a8" filter="url(#b3)" opacity="0.9" transform="rotate(-6 470 590)"/>
<ellipse cx="468" cy="590.5" rx="24" ry="2.2" fill="#fff" filter="url(#b2)" transform="rotate(-6 468 590)"/>
</g></svg>
<div id="title" class="abs"><span>GATHOM revolver*</span></div>
<div id="tool" class="abs"></div>
<svg class="abs" style="left:0;top:0" width="1768" height="83" viewBox="0 0 1768 83">
<defs>
<linearGradient id="lgLogo" x1="0" y1="0" x2="1" y2="1"><stop offset="0" stop-color="#c4d4dc"/><stop offset="1" stop-color="#8fb0c0"/></linearGradient>
<g id="cube"><polygon points="0,-10 9,-6 0,-2 -9,-6" fill="#fff" stroke="#444" stroke-width="1"/><polygon points="-9,-6 0,-2 0,10 -9,5.5" fill="#666"/><polygon points="9,-6 0,-2 0,10 9,5.5" fill="#444"/></g>
<g id="scube"><polygon points="0,-4.6 4.2,-2.8 0,-1 -4.2,-2.8" fill="#fff" stroke="#444" stroke-width=".8"/><polygon points="-4.2,-2.8 0,-1 0,4.6 -4.2,2.6" fill="#666"/><polygon points="4.2,-2.8 0,-1 0,4.6 4.2,2.6" fill="#444"/></g>
<polygon id="dd" points="0,0 -4,0 0,-4" fill="#7a7a7a"/>
</defs>
<!-- title icon -->
<polygon points="2,4.5 18,4.5 10,17.5" fill="#1a9fd4"/><polygon points="2,4.5 18,4.5 11,7.8" fill="#bfe6f5"/><polygon points="11,7.800 18,4.500 10,17.500" fill="#0b6f9c"/>
<!-- window controls -->
<path d="M1647,10.5h11" stroke="#fff" stroke-width="1"/>
<path d="M1692.5,8.5h7v7h-7z M1694.5,8.5v-2h7v7h-2" stroke="#fff" stroke-width="1" fill="none"/>
<path d="M1737.5,5.5l11,11 M1748.5,5.5l-11,11" stroke="#fff" stroke-width="1.1"/>
<!-- app logo -->
<rect x="8" y="31" width="43.5" height="43.5" rx="8" fill="url(#lgLogo)"/>
<path d="M30,67 L42,50 L51.5,56 L51.5,66.5 Q51.5,74.5 43.5,74.5 L36,74.5 Z" fill="#5b94ab" opacity=".85"/>
<polygon points="13,42.5 46.5,42.5 30,67.5" fill="#169ad0"/>
<polygon points="13,42.5 46.5,42.5 30,48.5" fill="#c5e9f7"/>
<polygon points="30,48.5 46.5,42.5 30,67.5" fill="#0d6f9e"/>
<!-- brand text -->
<text x="64.5" y="50.1" font-family="Liberation Sans,sans-serif" font-size="13.2" fill="#555" textLength="66" lengthAdjust="spacingAndGlyphs">AUTODESK</text>
<text x="131.5" y="45.5" font-family="Liberation Sans,sans-serif" font-size="5" fill="#555">®</text>
<text x="64.5" y="65.8" font-family="Liberation Sans,sans-serif" font-size="14" font-weight="bold" fill="#4d4d4d" textLength="95.5" lengthAdjust="spacingAndGlyphs">123D' DESIGN</text>
<path d="M199,54.5 L205.5,59 L212,54.5" stroke="#222" stroke-width="2.2" fill="none" stroke-linecap="round" stroke-linejoin="round"/>
<!-- undo / redo -->
<path d="M539,50 L548.5,44.5 V48.3 Q557.5,48.3 560,55.5 Q556,51.8 548.5,51.8 V55.5 Z" fill="#222"/>
<path d="M602,50 L592.5,44.5 V48.3 Q583.5,48.3 581,55.5 Q585,51.8 592.5,51.8 V55.5 Z" fill="#bdbdbd"/>
<g stroke="#999" stroke-width="1"><path d="M634.5,40V64M720.5,40V64M1193.5,40V64"/></g>
<!-- select/transform -->
<rect x="668.5" y="41.5" width="20" height="20" fill="none" stroke="#333" stroke-width="1" stroke-dasharray="1.2 1.6"/>
<use href="#scube" transform="translate(677,53) scale(1.45)"/>
<path d="M685,38v8M681,42h8" stroke="#333" stroke-width="1.1"/><path d="M685,36.8l1.8,2.2h-3.6zM685,47.2l1.8,-2.2h-3.6zM679.8,42l2.2,-1.8v3.6zM690.2,42l-2.2,-1.8v3.6z" fill="#333"/>
<use href="#dd" x="699" y="75"/>
<!-- primitives -->
<circle cx="769" cy="47" r="7" fill="#fff" stroke="#444" stroke-width="1"/>
<use href="#cube" transform="translate(762,52) scale(.95)"/>
<use href="#dd" x="785" y="75"/>
<!-- sketch -->
<path d="M801,46 Q796,53 801,57 Q806,60 811,53 Q808,47 803,45" fill="none" stroke="#333" stroke-width="1.3"/><circle cx="803" cy="45" r="2" fill="#333"/><circle cx="800" cy="57" r="2" fill="#333"/>
<path d="M808,55 L817,42 L820.5,44.5 L811.5,57.5 L807,59 Z" fill="#333"/>
<use href="#dd" x="828" y="75"/>
<!-- construct -->
<use href="#cube" transform="translate(850,53) scale(.95)"/>
<path d="M851,49 L857.5,40 L860,41.8 L853.5,50.8 Z" fill="#333"/>
<use href="#dd" x="871" y="75"/>
<!-- modify -->
<use href="#cube" transform="translate(891,53) scale(.95)"/>
<path d="M898,38v10l9,0" fill="none" stroke="#333" stroke-width="1.1"/><path d="M898,36.5l2,2.8h-4zM908.5,48l-2.8,-2v4z" fill="#333"/>
<use href="#dd" x="914" y="75"/>
<!-- pattern -->
<use href="#scube" transform="translate(931.5,46) scale(1.05)"/><use href="#scube" transform="translate(941.5,46) scale(1.05)"/><use href="#scube" transform="translate(931.5,56) scale(1.05)"/><use href="#scube" transform="translate(941.5,56) scale(1.05)"/>
<use href="#dd" x="957" y="75"/>
<!-- group -->
<circle cx="984.5" cy="48.5" r="6" fill="#fff" stroke="#444" stroke-width="1"/>
<use href="#scube" transform="translate(977.5,54.5) scale(1.35)"/>
<g fill="#333"><rect x="969" y="41" width="1.8" height="1.8"/><rect x="989" y="41" width="1.8" height="1.8"/><rect x="969" y="60.5" width="1.8" height="1.8"/><rect x="989" y="60.5" width="1.8" height="1.8"/></g>
<use href="#dd" x="1000" y="75"/>
<!-- combine -->
<g transform="translate(1026,51)"><polygon points="0,-9 6.5,-5.5 -2.5,-1.5 -9,-5" fill="#fff" stroke="#444" stroke-width=".9"/><polygon points="-3.5,-8.5 3,-5 -6,-1 -12.5,-4.5" fill="#fff" stroke="#444" stroke-width=".9"/><polygon points="-12.5,-4.5 -6,-1 -6,10 -12.5,6" fill="#666"/><polygon points="-6,-1 3,-5 3,6.5 -6,10" fill="#3c3c3c"/><polygon points="3,-5 6.5,-5.5 6.5,5 3,6.5" fill="#555"/></g>
<use href="#dd" x="1043" y="75"/>
<!-- measure -->
<use href="#cube" transform="translate(1064,51.5) scale(1)"/>
<rect x="1070.5" y="41.5" width="5.5" height="20" fill="#fff" stroke="#333" stroke-width="1"/><path d="M1072,45h4M1073.5,48h2.5M1072,51h4M1073.5,54h2.5M1072,57h4" stroke="#333" stroke-width=".8"/>
<!-- text -->
<path d="M1099.5,43.5h17.5v4.5h-6.3v13.3h-4.9v-13.3h-6.3z" fill="#222"/>
<!-- snap -->
<g transform="translate(1151,50) rotate(40)"><path d="M-7,8 V-1 A7,7 0 0 1 7,-1 V8 H3.2 V-1 A3.2,3.2 0 0 0 -3.2,-1 V8 Z" fill="#fff" stroke="#444" stroke-width="1"/><rect x="-7.5" y="4.5" width="4.8" height="4" fill="#333"/><rect x="2.7" y="4.5" width="4.8" height="4" fill="#333"/></g>
<!-- material -->
<g transform="translate(1237.5,51)"><polygon points="0,-10 10.5,-6 10.5,5 0,10 -10.5,5 -10.5,-6" fill="#fff"/><polygon points="0,-10 10.5,-6 0,-2 -10.5,-6" fill="#555"/><g stroke="#333" stroke-width="1.5"><path d="M-10.5,-3.5L0,.8M-10.5,-.3L0,4M-10.5,2.9L0,7.2M-10.5,5.5L0,10"/><path d="M0,1.5L9,-5M1,5L10.5,-2.5M3,8L10.5,1.5M7,7.5L10.5,4.5" stroke-width="1.3"/></g></g>
</svg>
<div class="abs btn" style="left:1502px;top:36px;width:136px;height:35px"><div style="font-size:15px;line-height:16px;margin-top:3px;letter-spacing:-.2px">Go Premium</div><div style="font-size:7.8px;line-height:9px;font-weight:normal;margin-top:3.5px">(FOR COMMERCIAL USE)</div></div>
<div class="abs btn" style="left:1644px;top:36px;width:79px;height:35px;font-size:15.5px;line-height:34px;letter-spacing:-.2px">Sign In</div>
<div class="abs" style="left:1729px;top:36px;width:34px;height:34px;border:1px solid #adadad;background:linear-gradient(#fafafa,#dedede);font-size:19px;line-height:32px;text-align:center;color:#222">?</div>

<div class="abs" style="left:1760px;top:83px;width:8px;height:869px;background:#b5bcbc"></div>
<div class="abs" style="left:1760px;top:462px;width:8px;height:148px;background:#0099cc"></div>
<svg class="abs" style="left:1640px;top:95px" width="128" height="500" viewBox="1640 95 128 500">
<defs>
<linearGradient id="lgVC" x1="0" y1="0" x2="0" y2="1"><stop offset="0" stop-color="#e4e4e4"/><stop offset="1" stop-color="#c6c6c6"/></linearGradient>
<linearGradient id="lgVB" x1="0" y1="0" x2="0" y2="1"><stop offset="0" stop-color="#9fd0e4"/><stop offset="1" stop-color="#a9c6d0"/></linearGradient>
<g id="ncube"><polygon points="0,-7 6.5,-4.2 0,-1.4 -6.5,-4.2" fill="#fff" stroke="#444" stroke-width=".8"/><polygon points="-6.5,-4.2 0,-1.4 0,7.5 -6.5,4.2" fill="#666"/><polygon points="6.5,-4.2 0,-1.4 0,7.5 6.5,4.2" fill="#3c3c3c"/></g>
</defs>
<polygon points="1761.5,537 1767,531 1767,543" fill="#fff"/>
<!-- view cube -->
<rect x="1676.5" y="107.5" width="54" height="53" fill="url(#lgVC)" stroke="#9a9a9a" stroke-width="1" stroke-dasharray="5 2"/>
<rect x="1686" y="117.5" width="33" height="33.5" fill="url(#lgVB)"/>
<text x="1703" y="138.6" text-anchor="middle" font-family="Liberation Sans,sans-serif" font-weight="bold" font-size="13.5" fill="#1a1a1a" textLength="37" lengthAdjust="spacingAndGlyphs">FRONT</text>
<path d="M1660,165.5H1745" stroke="#dcdcdc" stroke-width="1"/>
<!-- nav bar -->
<rect x="1701.5" y="198.5" width="35" height="386" fill="#f0f0f0" stroke="#c6c6c6" stroke-width="2"/>
<path d="M1708,310.5h22M1708,495.5h22" stroke="#8c8c8c" stroke-width="1"/>
<!-- pan -->
<g stroke="#333" stroke-width="1.2" fill="#333"><path d="M1719,209v19M1709.5,218.5h19" /><path d="M1719,207l2.3,3.3h-4.6zM1719,230l2.3,-3.3h-4.6zM1708,218.5l3.3,-2.3v4.6zM1730,218.5l-3.3,-2.3v4.6z" stroke="none"/></g>
<!-- orbit -->
<use href="#ncube" transform="translate(1719,254) scale(.9)"/>
<path d="M1710.5,247 A10.5,10.5 0 0 0 1714,263 M1727.5,261 A10.5,10.5 0 0 0 1724,245" fill="none" stroke="#333" stroke-width="1.2"/><path d="M1716.5,264.5l-4,-.2 2,-3zM1721.5,243.5l4,.2 -2,3z" fill="#333"/>
<!-- zoom -->
<circle cx="1717" cy="287" r="6.8" fill="#fff" stroke="#333" stroke-width="1.3"/><path d="M1722,292.5l5.5,5.5" stroke="#333" stroke-width="3" stroke-linecap="round"/>
<!-- fit -->
<use href="#ncube" transform="translate(1719,333.5) scale(.9)"/>
<path d="M1709.5,327v-4.5h4.5M1724,322.5h4.5v4.5M1728.500,339v4.500h-4.500M1714,343.5h-4.500v-4.500" fill="none" stroke="#333" stroke-width="1.2"/>
<!-- material view -->
<circle cx="1723.5" cy="363.500" r="6.3" fill="#fff" stroke="#555" stroke-width=".9"/>
<use href="#ncube" transform="translate(1716.5,370) scale(1.15)"/>
<!-- eye -->
<path d="M1708.500,403 Q1719,392 1729.500,403 Q1719,414 1708.500,403Z" fill="#fff" stroke="#333" stroke-width="1.3"/><circle cx="1719" cy="403" r="4" fill="#666"/>
<!-- grid eye -->
<path d="M1711,432h14l3,13h-19zM1709.500,440h18M1710.300,436h16M1716,432l-2,13M1721,432l1.500,13" fill="none" stroke="#333" stroke-width="1"/><path d="M1713,437 Q1721,429 1729,437 Q1721,445 1713,437Z" fill="#fff" stroke="#333" stroke-width="1"/><circle cx="1721" cy="437" r="2.600" fill="#555"/><path d="M1708.500,448.500L1730,427.500" stroke="#222" stroke-width="1.800"/>
<!-- camera -->
<path d="M1709,467h5l2,-3.200h6.500l2,3.200h5v14.500h-20.500z" fill="#3c3c3c"/><circle cx="1719" cy="474" r="5" fill="#3c3c3c" stroke="#fff" stroke-width="1.800"/><rect x="1725.500" y="468.800" width="2" height="1.600" fill="#fff"/>
<!-- snap -->
<g transform="translate(1725.500,510) rotate(40) scale(.62)"><path d="M-7,8 V-1 A7,7 0 0 1 7,-1 V8 H3.200 V-1 A3.200,3.200 0 0 0 -3.200,-1 V8 Z" fill="#fff" stroke="#444" stroke-width="1.400"/><rect x="-7.500" y="4.500" width="4.800" height="4" fill="#333"/><rect x="2.700" y="4.500" width="4.800" height="4" fill="#333"/></g>
<g transform="translate(1719,520)"><polygon points="-1,-7 8.500,-3 0,.5 -9.500,-3.500" fill="#fff" stroke="#444" stroke-width=".8"/><polygon points="-9.500,-3.500 0,.5 0,9 -9.500,4.500" fill="#666"/><polygon points="8.500,-3 0,.5 0,9 8.500,5" fill="#3c3c3c"/><path d="M3.500,-5v4.500" stroke="#444" stroke-width=".8"/></g>
<g fill="#222"><rect x="1708" y="508" width="1.600" height="1.600"/><rect x="1708" y="525.500" width="1.600" height="1.600"/><rect x="1728.500" y="525.500" width="1.600" height="1.600"/></g>
<!-- snap off -->
<g transform="translate(1721,559) rotate(35) scale(.95)"><path d="M-7,8 V-1 A7,7 0 0 1 7,-1 V8 H3.200 V-1 A3.200,3.200 0 0 0 -3.200,-1 V8 Z" fill="#fff" stroke="#333" stroke-width="1.300"/><rect x="-7.500" y="4" width="4.800" height="4.500" fill="#333"/><rect x="2.700" y="4" width="4.800" height="4.500" fill="#333"/></g>
<use href="#ncube" transform="translate(1710.500,550.500) scale(.5)"/>
<path d="M1707.500,557 Q1709,567 1728,567.500" fill="none" stroke="#333" stroke-width="1.200" stroke-dasharray="1.500 1.500"/>
<path d="M1708.500,570L1731,547.500" stroke="#222" stroke-width="2"/>
</svg>
<div class="abs" style="left:1589px;top:872px;width:155px;height:22px;background:#c8c8c8;font-weight:bold;font-size:13.5px;line-height:22px;text-align:center;color:#111">Edit Grid</div>
<div class="abs" style="left:1589px;top:899px;width:75px;height:22px;background:#fff;border:2px solid #d2d2d2;font-weight:bold;font-size:13px;line-height:18px;text-align:center;color:#111">1</div>
<div class="abs" style="left:1669px;top:899px;width:75px;height:22px;background:#fff;border:2px solid #d2d2d2;font-weight:bold;font-size:13px;line-height:18px;text-align:center;color:#111">1</div>
<div class="abs" style="left:1589px;top:926px;width:75px;font-weight:bold;font-size:9px;line-height:11px;text-align:center;color:#111;letter-spacing:.2px;white-space:nowrap">Linear Snap</div>
<div class="abs" style="left:1669px;top:926px;width:75px;font-weight:bold;font-size:9px;line-height:11px;text-align:center;color:#111;letter-spacing:.2px;white-space:nowrap">Angular Snap</div>

<div id="task" class="abs"></div>
<div class="abs" style="left:834px;top:952px;width:48px;height:40px;background:#f3f3f3"></div>
<div class="abs" style="left:48px;top:952px;width:343px;height:40px;background:#fff;border:1px solid #cfcfcf;border-bottom:none"></div>
<div class="abs" style="left:88px;top:963px;font-size:15px;line-height:20px;color:#3a3a3a;white-space:nowrap;letter-spacing:-.3px">Type here to search</div>
<svg class="abs" style="left:0;top:952px" width="1768" height="40" viewBox="0 952 1768 40">
<defs>
<radialGradient id="rgSun" cx=".4" cy=".4" r=".7"><stop offset="0" stop-color="#ffd84a"/><stop offset="1" stop-color="#f9a010"/></radialGradient>
<linearGradient id="lgEdge" x1="0" y1="0" x2="1" y2="1"><stop offset="0" stop-color="#35c1f1"/><stop offset=".5" stop-color="#1b9de2"/><stop offset="1" stop-color="#0c59a4"/></linearGradient>
<linearGradient id="lgEdge2" x1="0" y1="0" x2="1" y2="0"><stop offset="0" stop-color="#2fc2a8"/><stop offset="1" stop-color="#7fe06a"/></linearGradient>
</defs>
<!-- start -->
<g fill="#111"><polygon points="16,966.200 22.800,965.200 22.800,971.500 16,971.500"/><polygon points="24,965 32.200,963.800 32.200,971.500 24,971.500"/><polygon points="16,972.700 22.800,972.700 22.800,979 16,978"/><polygon points="24,972.700 32.200,972.700 32.200,980.300 24,979.100"/></g>
<!-- search icon -->
<circle cx="70" cy="969.500" r="5.500" fill="none" stroke="#222" stroke-width="1.300"/><path d="M66,973.500l-6,6" stroke="#222" stroke-width="1.300"/>
<!-- cortana -->
<circle cx="416" cy="972" r="6.500" fill="none" stroke="#111" stroke-width="2"/>
<!-- task view -->
<g fill="none" stroke="#111" stroke-width="1.300"><rect x="458" y="967.500" width="9" height="9"/><path d="M456,964.500h13M456,979.500h13"/><path d="M470.500,966v5M470.500,973.500v5" stroke-width="1.800"/></g>
<!-- edge -->
<circle cx="514" cy="972" r="11.500" fill="url(#lgEdge)"/><path d="M503,970 Q505,960.500 515,960.500 Q525.500,961 525.500,970 Q525,975 519,975.500 Q515,975 516.500,972 Q518,968 513,967 Q506,967 503,973Z" fill="url(#lgEdge2)"/><path d="M509,973 Q508,980 516,983 Q510,984 506,979 Q503,974 505,970Z" fill="#0b4f94"/><ellipse cx="514.500" cy="973.500" rx="3" ry="2.500" fill="#e6e6e6"/>
<rect x="495" y="990" width="40" height="2" fill="#c4343c"/>
<!-- pinterest -->
<circle cx="564" cy="972" r="11.800" fill="#e60023"/><path d="M564.500,964.500c-4.200,0-6.300,2.800-6.300,5.300 0,1.500.6,2.800 1.800,3.300.2.100.4 0 .4-.2l.2-.7c.1-.2 0-.3-.1-.5-.4-.4-.6-1-.6-1.800 0-2.300 1.700-4.300 4.400-4.300 2.400 0 3.700 1.500 3.700 3.400 0 2.600-1.100 4.700-2.800 4.700-.9 0-1.600-.8-1.400-1.700.3-1.100.8-2.300.8-3.100 0-.7-.4-1.300-1.200-1.300-.9 0-1.700 1-1.700 2.300 0 .8.300 1.400.3 1.400l-1.100 4.700c-.3 1.400 0 3.100 0 3.300 0 .1.100.1.200.1.100-.1 1.100-1.400 1.500-2.700l.6-2.300c.3.600 1.200 1.100 2.100 1.100 2.800 0 4.700-2.600 4.700-6 0-2.600-2.200-5-5.500-5z" fill="#fff"/>
<!-- explorer -->
<path d="M600.500,963h8l2,2.500h13v4h-23z" fill="#e9a520"/><rect x="600.500" y="966.500" width="23.500" height="15.500" rx="1" fill="#fbd35a"/><rect x="600.500" y="974" width="23.500" height="8" fill="#f4c03e"/><path d="M606.500,976h11.500v6h-3v-3h-5.500v3h-3z" fill="#3d8fd6"/>
<!-- store -->
<path d="M656,966v-2.500a5,5 0 0 1 10,0v2.500" fill="none" stroke="#222" stroke-width="1.500"/><rect x="649.500" y="966" width="23" height="17.500" fill="#2b2b2b"/><rect x="656" y="969.500" width="4.500" height="4.500" fill="#f25022"/><rect x="661.500" y="969.500" width="4.500" height="4.500" fill="#7fba00"/><rect x="656" y="975" width="4.500" height="4.500" fill="#00a4ef"/><rect x="661.500" y="975" width="4.500" height="4.500" fill="#ffb900"/>
<!-- mail -->
<polygon points="699.500,969 711,961 722.500,969" fill="#1068c8"/><rect x="699.500" y="969" width="23" height="13.500" fill="#2c8fe8"/><polygon points="699.500,969 711,977 722.500,969 722.500,970.500 711,979 699.500,970.500" fill="#e8f4ff"/><polygon points="699.500,982.500 709,975.500 711,977 713,975.500 722.500,982.500" fill="#1a7ad8"/>
<!-- office -->
<path d="M751,966.500l9.500,-5 7.500,2v17l-7.500,2.500-9.500,-4.500 9.500,1.500v-15.500l-5.500,2v9.500l-4,2z" fill="#e43a1c"/><path d="M760.500,961.500l7.500,2v17l-7.500,2.500z" fill="#c22a10"/>
<!-- chrome -->
<circle cx="808" cy="972" r="11.500" fill="#fbbc05"/><path d="M808,972l-9.960,-5.750a11.500,11.500 0 0 1 19.920,0z" fill="#ea4335"/><path d="M798.040,966.250a11.500,11.500 0 0 0 9.960,17.250l5,-8.500z" fill="#34a853"/><path d="M808,960.500a11.500,11.500 0 0 1 9.960,5.750h-9.960z" fill="#ea4335"/><circle cx="808" cy="972" r="5.300" fill="#fff"/><circle cx="808" cy="972" r="4.200" fill="#4285f4"/>
<!-- 123D -->
<polygon points="845,962.500 872,962.500 858,982" fill="#1a9fd4"/><polygon points="845,962.500 872,962.500 859,967.500" fill="#c5e9f7"/><polygon points="859,967.500 872,962.500 858,982" fill="#0b6f9c"/>
<rect x="834" y="990" width="48" height="2" fill="#c4343c"/>
<!-- red/green tri -->
<polygon points="896,963 919,964 908,982" fill="#d8382c"/><polygon points="900,966.500 914,967 907.500,977" fill="#9cc07a"/><polygon points="904,969 911,969.500 907.500,974.500" fill="#e0584a"/><polygon points="896,963 908,982 901,976" fill="#a8281e"/>
<!-- ps -->
<rect x="944.500" y="960.500" width="23.500" height="23.500" rx="4" fill="#0c1d3a"/><polygon points="956.200,963.500 964.500,972.200 956.200,981 948,972.200" fill="none" stroke="#31a8ff" stroke-width="1.200"/><text x="956.300" y="976" text-anchor="middle" font-family="Liberation Sans,sans-serif" font-weight="bold" font-size="9.500" fill="#31a8ff">Ps</text>
<!-- polyhedron -->
<polygon points="998,962 1012,961.500 1017,972 1009,983 997,981 993.500,971" fill="#8c8c9c"/><polygon points="1004,966.500 1012,961.500 1017,972 1009,983 1003,975" fill="#d8502c"/><polygon points="998,962 1004,966.500 1003,975 993.500,971" fill="#a8a8b8"/><polygon points="1003,975 1009,983 997,981 993.500,971" fill="#6c6c84"/><polygon points="998,962 1012,961.500 1004,966.500" fill="#c4c4d0"/>
<!-- C -->
<rect x="1042.500" y="960.500" width="23.500" height="23.500" rx="4.500" fill="#16a3c9"/><path d="M1061,966.500a8.500,8.500 0 1 0 0,11" fill="none" stroke="#fff" stroke-width="1.600"/><path d="M1059,968.500a5.500,5.500 0 1 0 0,7" fill="none" stroke="#fff" stroke-width="1.400"/>
<!-- red cube -->
<rect x="1091.500" y="960.500" width="23" height="23" fill="#d0202c"/><path d="M1103,964.500l7.500,3.500v8.500l-7.500,3.500-7.500,-3.500v-8.500zM1095.500,968l7.500,3.500 7.500,-3.500M1103,971.500v8.500" fill="none" stroke="#fff" stroke-width="1.300" stroke-linejoin="round"/>
<!-- photos -->
<rect x="1141" y="961" width="22.500" height="22.500" fill="#1b6ac6"/><polygon points="1141,983.500 1141,976 1150,967.500 1163.500,980 1163.500,983.500" fill="#14408c"/><polygon points="1152,983.500 1158.500,974.500 1163.500,979 1163.500,983.500" fill="#3f82e0"/><circle cx="1156.500" cy="966" r="2.200" fill="#fff"/>
<!-- people -->
<g fill="none" stroke="#222" stroke-width="1.200"><circle cx="1327.500" cy="972" r="2.600"/><path d="M1322.500,979.500q1,-4.500 5,-4.500q3,0 4.500,3"/><circle cx="1335" cy="967" r="2.600"/><path d="M1331.500,972.500q2,-3 5,-2.500q3,.5 3.500,4.500"/></g>
<!-- sun -->
<circle cx="1449.500" cy="972" r="9" fill="url(#rgSun)"/>
<!-- tray -->
<path d="M1561,975l5.500,-5.500 5.500,5.500" fill="none" stroke="#222" stroke-width="1.300"/>
<path d="M1584.500,977.500h11a3.500,3.500 0 0 0 .5,-7a5,5 0 0 0 -9.500,-1.200a4.200,4.200 0 0 0 -2,8.200z" fill="#9a9a9a" stroke="#333" stroke-width="1"/>
<g fill="none" stroke="#222" stroke-width="1.100"><rect x="1610.500" y="968.500" width="7" height="7.500" rx="1.500"/><path d="M1617.500,971l3,-1.500v5.500l-3,-1.500"/><path d="M1611,966.500q3.500,-2.500 7,0M1611,978.500q3.500,2.500 7,0"/></g>
<g fill="none" stroke="#222" stroke-width="1.200"><path d="M1634,979a12,12 0 0 1 12,-12" /><path d="M1637.500,979.500a8.500,8.500 0 0 1 8.500,-8.500"/><path d="M1641,980a5,5 0 0 1 5,-5"/></g><circle cx="1645.500" cy="979" r="1.500" fill="#222"/>
<!-- notification -->
<path d="M1727.500,964h16v13.500h-10.500l-3,3.500v-3.500h-2.500z" fill="#111"/><path d="M1730.500,967.500h10M1730.500,970.500h10M1730.500,973.500h10" stroke="#e6e6e6" stroke-width=".9"/>
<circle cx="1743" cy="979.500" r="7.500" fill="#dcdcdc" stroke="#b0b0b0" stroke-width="1"/>
<path d="M1763.500,952v40" stroke="#9a9a9a" stroke-width="1"/>
</svg>
<div class="abs" style="left:1469px;top:964px;font-size:13.5px;line-height:18px;color:#222;white-space:nowrap">46°F&nbsp; Sunny</div>
<div class="abs" style="left:1648px;top:956px;width:70px;font-size:12px;line-height:15px;color:#222;text-align:center;white-space:nowrap">12:44 PM</div>
<div class="abs" style="left:1648px;top:974px;width:70px;font-size:12px;line-height:15px;color:#222;text-align:center;white-space:nowrap">10/25/2021</div>
<div class="abs" style="left:1736px;top:973px;width:14px;font-size:10.500px;line-height:13px;color:#222;text-align:center">2</div>

</div></body></html>
